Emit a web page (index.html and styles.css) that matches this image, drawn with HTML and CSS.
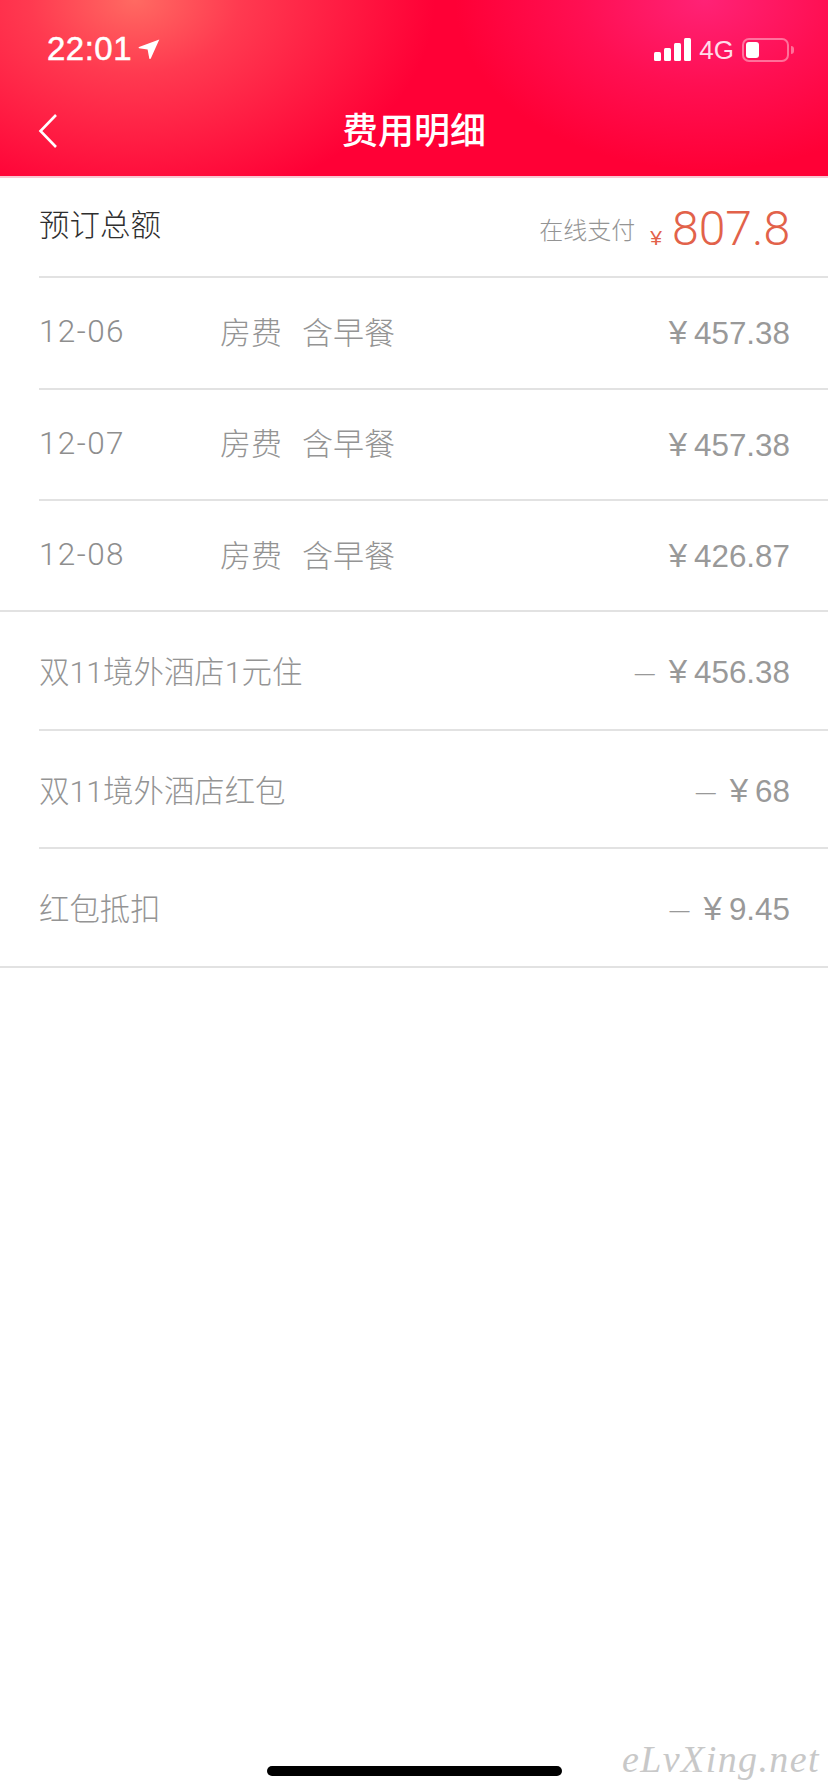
FILE: index.html
```html
<!DOCTYPE html>
<html lang="zh-CN">
<head>
<meta charset="utf-8">
<title>费用明细</title>
<link rel="stylesheet" href="styles.css">
</head>
<body>
<div class="page">
  <header class="header">
    <div class="status">
      <div class="status-left">
        <span class="time">22:01</span>
        <svg class="arrow" width="22" height="21" viewBox="0 0 22 21"><path d="M21.3 0.4 L12.8 19.6 Q12 20.6 11.3 19.4 L9.6 10.6 L1 9.2 Q0 8.5 1 7.9 Z" fill="#fff"/></svg>
      </div>
      <div class="status-right">
        <div class="signal"><i class="bar b1"></i><i class="bar b2"></i><i class="bar b3"></i><i class="bar b4"></i></div>
        <span class="net">4G</span>
        <div class="battery"><div class="battery-body"><i class="battery-fill"></i></div><i class="battery-nub"></i></div>
      </div>
    </div>
    <nav class="nav">
      <svg class="back" width="20" height="36" viewBox="0 0 20 36"><path d="M18 2 L2.5 18 L18 34" fill="none" stroke="#fff" stroke-width="2.6"/></svg>
      <h1 class="title">费用明细</h1>
    </nav>
  </header>

  <main class="list">
    <section class="row row-total inset">
      <span class="total-label">预订总额</span>
      <div class="total-right"><span class="pay">在线支付</span><span class="cur">¥</span><span class="sum">807.8</span></div>
    </section>

    <section class="row row-day inset">
      <span class="date">12-06</span>
      <span class="kind">房费</span><span class="meal">含早餐</span>
      <span class="amount"><span class="yen">¥</span>457.38</span>
    </section>
    <section class="row row-day inset">
      <span class="date">12-07</span>
      <span class="kind">房费</span><span class="meal">含早餐</span>
      <span class="amount"><span class="yen">¥</span>457.38</span>
    </section>
    <section class="row row-day row-last full">
      <span class="date">12-08</span>
      <span class="kind">房费</span><span class="meal">含早餐</span>
      <span class="amount"><span class="yen">¥</span>426.87</span>
    </section>

    <section class="row row-off inset">
      <span class="name">双11境外酒店1元住</span>
      <span class="amount amount-off"><span class="minus">—</span><span class="yen">¥</span>456.38</span>
    </section>
    <section class="row row-off inset">
      <span class="name">双11境外酒店红包</span>
      <span class="amount amount-off"><span class="minus">—</span><span class="yen">¥</span>68</span>
    </section>
    <section class="row row-off full">
      <span class="name">红包抵扣</span>
      <span class="amount amount-off"><span class="minus">—</span><span class="yen">¥</span>9.45</span>
    </section>
  </main>

  <div class="home-bar"></div>
  <span class="watermark">eLvXing.net</span>
</div>
</body>
</html>
```
FILE: styles.css
```css
* { box-sizing: border-box; margin: 0; padding: 0; }

html, body { background: #fff; }

body {
  font-family: "Liberation Sans", "Noto Sans CJK SC", sans-serif;
}

.page {
  position: relative;
  width: 828px;
  height: 1792px;
  display: flex;
  flex-direction: column;
  overflow: hidden;
  background: #fff;
}

/* Header */
.header {
  height: 178px;
  flex: none;
  color: #fff;
  border-bottom: 2px solid #f9c6d2;
  background:
    radial-gradient(ellipse 300px 210px at 135px 0, #ff6a62 0%, rgba(255, 80, 90, 0.72) 35%, rgba(255, 0, 54, 0) 100%),
    radial-gradient(ellipse 250px 170px at 705px 0, #ff2276 0%, rgba(255, 30, 110, 0.5) 50%, rgba(255, 0, 54, 0) 100%),
    #ff0036;
}

.status {
  height: 88px;
  display: flex;
  justify-content: space-between;
  align-items: flex-start;
  padding: 30px 34px 0 47px;
}

.status-left {
  display: flex;
  align-items: center;
  gap: 6px;
}

.time {
  font-size: 33px;
  line-height: 38px;
  -webkit-text-stroke: 0.5px #fff;
  letter-spacing: 0.5px;
}

.status-right {
  display: flex;
  align-items: center;
  height: 38px;
  margin-top: 1px;
}

.signal {
  display: flex;
  align-items: flex-end;
  gap: 3px;
  height: 23px;
  margin-top: -1px;
}

.bar {
  display: block;
  width: 7px;
  border-radius: 1.5px;
  background: #fff;
}
.b1 { height: 9px; }
.b2 { height: 13px; }
.b3 { height: 18px; }
.b4 { height: 23px; }

.net {
  margin: 0 8px;
  font-size: 26px;
  color: #ffdcea;
}

.battery {
  display: flex;
  align-items: center;
  gap: 2px;
}

.battery-body {
  width: 47px;
  height: 24px;
  padding: 2px;
  border: 2px solid rgba(255, 255, 255, 0.4);
  border-radius: 7px;
}

.battery-fill {
  display: block;
  width: 13px;
  height: 100%;
  border-radius: 3px;
  background: #fff;
}

.battery-nub {
  display: block;
  width: 3px;
  height: 8px;
  border-radius: 0 3px 3px 0;
  background: rgba(255, 255, 255, 0.4);
}

.nav {
  position: relative;
  height: 88px;
  display: flex;
  align-items: center;
  justify-content: center;
}

.back {
  position: absolute;
  left: 38px;
  top: 25px;
}

.title {
  font-size: 36px;
  line-height: 46px;
  font-weight: 500;
}

/* Rows */
.row {
  position: relative;
  display: flex;
  align-items: center;
  padding: 0 38px 0 39px;
}

.row::after {
  content: "";
  position: absolute;
  right: 0;
  bottom: 0;
  height: 2px;
  background: #e2e2e2;
}

.inset::after { left: 39px; }
.full::after { left: 0; }

.row-total { height: 100px; }
.row-day { height: 111.5px; }
.row-day.row-last { height: 111px; }
.row-off { height: 118.6px; }

.total-label {
  font-size: 30.5px;
  font-weight: 300;
  color: #2e2e2e;
  margin-top: -10px;
}

.total-right {
  margin-left: auto;
  white-space: nowrap;
}

.pay {
  font-size: 24px;
  font-weight: 300;
  color: #949494;
  vertical-align: 6px;
}

.cur {
  margin-left: 15px;
  font-size: 21px;
  color: #e2624a;
}

.sum {
  margin-left: 10px;
  font-family: "Roboto", "Liberation Sans", sans-serif;
  font-size: 48px;
  font-weight: 300;
  color: #e2624a;
}

.date {
  width: 181px;
  font-family: "Roboto", "Liberation Sans", sans-serif;
  font-size: 31.5px;
  font-weight: 300;
  letter-spacing: 1.4px;
  color: #8e8e8e;
  margin-top: -4px;
}

.kind,
.meal,
.name {
  font-family: "Roboto", "Noto Sans CJK SC", sans-serif;
  font-weight: 300;
  color: #949494;
}

.kind,
.meal {
  font-size: 31px;
  margin-top: -7px;
}

.kind { margin-right: 20px; }

.name {
  font-size: 30.4px;
  margin-top: -2px;
}

.amount {
  margin-left: auto;
  font-size: 31.4px;
  color: #999;
  margin-top: -1px;
}

.amount-off { margin-top: 2px; }

.yen {
  margin-right: 7px;
  font-size: 33px;
}

.minus {
  display: inline-block;
  margin-right: 14px;
  font-size: 20px;
  vertical-align: 3px;
}

/* Home indicator */
.home-bar {
  position: absolute;
  left: 267px;
  top: 1766px;
  width: 295px;
  height: 10px;
  border-radius: 5px;
  background: #000;
}

.watermark {
  position: absolute;
  left: 622px;
  top: 1737px;
  font-family: "Liberation Serif", serif;
  font-style: italic;
  font-size: 38px;
  letter-spacing: 1.4px;
  color: #c8c8c8;
}
```
